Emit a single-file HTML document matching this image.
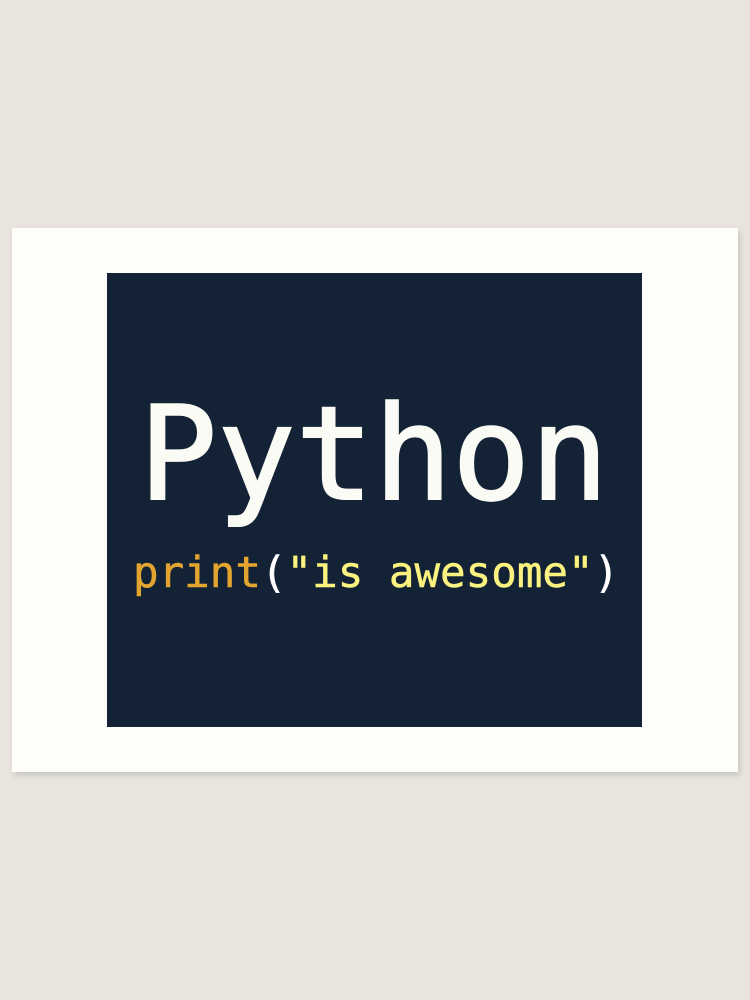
<!DOCTYPE html>
<html><head><style>
body{margin:0;width:750px;height:1000px;background:#e9e5de;position:relative;overflow:hidden}
.paper{position:absolute;left:12px;top:228px;width:726px;height:544px;background:#fdfdf9;box-shadow:2px 3px 6px rgba(0,0,0,0.15)}
.box{position:absolute;left:107px;top:273px;width:535px;height:454px;background:#132335}
.t{position:absolute;font-family:"DejaVu Sans Mono","Liberation Mono",monospace;line-height:1;white-space:pre}
</style></head><body>
<div class="paper"></div>
<div class="box"></div>
<div class="t" style="left:139px;top:389px;font-size:130px;color:#fbfbf6;-webkit-text-stroke:2px #fbfbf6">Python</div>
<div class="t" style="left:133px;top:553px;font-size:42.5px;color:#fbf27f;-webkit-text-stroke:0.5px currentColor"><span style="color:#e4a530">print</span><span style="color:#fff">(</span>"is awesome"<span style="color:#fff">)</span></div>
</body></html>
